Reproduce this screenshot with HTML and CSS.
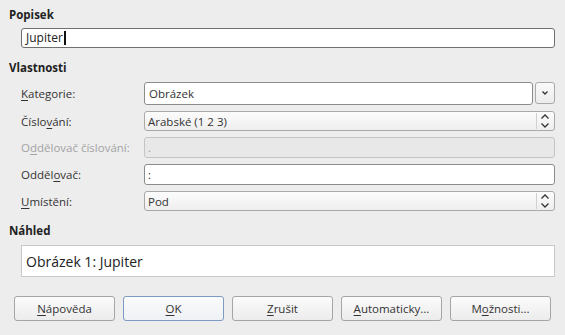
FILE: index.html
```html
<!DOCTYPE html>
<html lang="cs">
<head>
<meta charset="utf-8">
<link rel="stylesheet" href="styles.css">
</head>
<body>
<div class="dialog">
  <div class="heading h-popisek">Popisek</div>
  <div class="indent">
    <div class="textbox caption">Jupiter<span class="caret"></span></div>
  </div>

  <div class="heading h-vlast">Vlastnosti</div>
  <div class="indent form">
    <div class="label"><u>K</u>ategorie:</div>
    <div class="combo-row">
      <div class="field combo">Obrázek</div>
      <div class="drop-btn">
        <svg width="8" height="6" viewBox="0 0 8 6"><path d="M1.5 1.5 L4 4 L6.5 1.5" fill="none" stroke="#333" stroke-width="1.3"/></svg>
      </div>
    </div>

    <div class="label">Číslo<u>v</u>ání:</div>
    <div class="field select">Arabské (1 2 3)<span class="spin"><svg width="10" height="16" viewBox="0 0 10 16"><path d="M1.5 5.5 L5 2 L8.5 5.5 M1.5 10.5 L5 14 L8.5 10.5" fill="none" stroke="#333" stroke-width="1.3"/></svg></span></div>

    <div class="label disabled">O<u>d</u>dělovač číslování:</div>
    <div class="field entry disabled-field">.</div>

    <div class="label">Odděl<u>o</u>vač:</div>
    <div class="field entry">:</div>

    <div class="label"><u>U</u>místění:</div>
    <div class="field select">Pod<span class="spin"><svg width="10" height="16" viewBox="0 0 10 16"><path d="M1.5 5.5 L5 2 L8.5 5.5 M1.5 10.5 L5 14 L8.5 10.5" fill="none" stroke="#333" stroke-width="1.3"/></svg></span></div>
  </div>

  <div class="heading h-nahled">Náhled</div>
  <div class="indent">
    <div class="preview">Obrázek 1: Jupiter</div>
  </div>

  <div class="buttons">
    <div class="btn"><u>N</u>ápověda</div>
    <div class="btn default"><u>O</u>K</div>
    <div class="btn"><u>Z</u>rušit</div>
    <div class="btn"><u>A</u>utomaticky...</div>
    <div class="btn">M<u>o</u>žnosti...</div>
  </div>
</div>
</body>
</html>
```

FILE: styles.css
```css
html, body {
  margin: 0;
  padding: 0;
}
body {
  background: #ededed;
  font-family: "Open Sans", "Noto Sans", sans-serif;
  font-size: 11.5px;
  color: #333;
  width: 565px;
  height: 335px;
  overflow: hidden;
}
u {
  text-decoration: underline;
  text-underline-offset: 2px;
}
.dialog {
  padding: 7px 10px 0 9px;
}
.heading {
  font-weight: bold;
  color: #222;
  line-height: 16px;
}
.h-vlast { margin-top: 12px; }
.h-nahled { margin-top: 12px; }
.indent {
  padding-left: 12px;
}
.textbox {
  height: 20px;
  box-sizing: border-box;
  border: 1px solid #6f6f6f;
  border-radius: 3px;
  background: #fff;
  padding: 0 4px;
  line-height: 18px;
  display: flex;
  align-items: center;
}
.caption {
  margin-top: 5px;
  font-size: 12px;
  color: #222;
}
.caret {
  display: inline-block;
  width: 2px;
  height: 14px;
  background: #111;
  margin-left: 1px;
}
.form {
  display: grid;
  grid-template-columns: 123px 411px;
  row-gap: 6px;
  margin-top: 6px;
  align-items: center;
}
.label {
  color: #333;
}
.label.disabled {
  color: #a3a3a3;
}
.field {
  height: 21px;
  box-sizing: border-box;
  border: 1px solid #a9a9a9;
  border-radius: 3px;
  padding: 0 4px 0 3px;
  display: flex;
  align-items: center;
  position: relative;
}
.combo-row {
  display: flex;
  gap: 2px;
}
.combo {
  flex: 1;
  height: 23px;
  background: #fff;
  border-color: #8c8c8c;
  padding-left: 4px;
}
.drop-btn {
  width: 20px;
  height: 22px;
  box-sizing: border-box;
  border: 1px solid #a9a9a9;
  border-radius: 3px;
  background: linear-gradient(#fafafa, #ececec);
  display: flex;
  align-items: center;
  justify-content: center;
}
.select {
  background: linear-gradient(#fcfcfc, #eeeeee);
  height: 20px;
}
.spin {
  position: absolute;
  right: 4px;
  top: 1px;
  height: 16px;
  padding-left: 3px;
  border-left: 1px solid #d0d0d0;
  display: flex;
  align-items: center;
}
.entry {
  background: #fff;
  border-color: #8c8c8c;
}
.disabled-field {
  background: #e8e8e8;
  border-color: #c4c4c4;
  color: #9a9a9a;
}
.preview {
  margin-top: 6px;
  height: 32px;
  box-sizing: border-box;
  border: 1px solid #c8c8c8;
  background: #fff;
  font-size: 14px;
  color: #222;
  padding-left: 4px;
  display: flex;
  align-items: center;
}
.buttons {
  display: flex;
  gap: 8px;
  padding-left: 5px;
  margin-top: 19px;
}
.btn {
  width: 101px;
  height: 25px;
  box-sizing: border-box;
  border: 1px solid #a5a5a5;
  border-radius: 3px;
  background: linear-gradient(#fbfbfb, #ececec);
  display: flex;
  align-items: center;
  justify-content: center;
  color: #333;
}
.btn.default {
  border-color: #7d9ac4;
  background: linear-gradient(#fbfbfb, #eef1f5);
}
```
